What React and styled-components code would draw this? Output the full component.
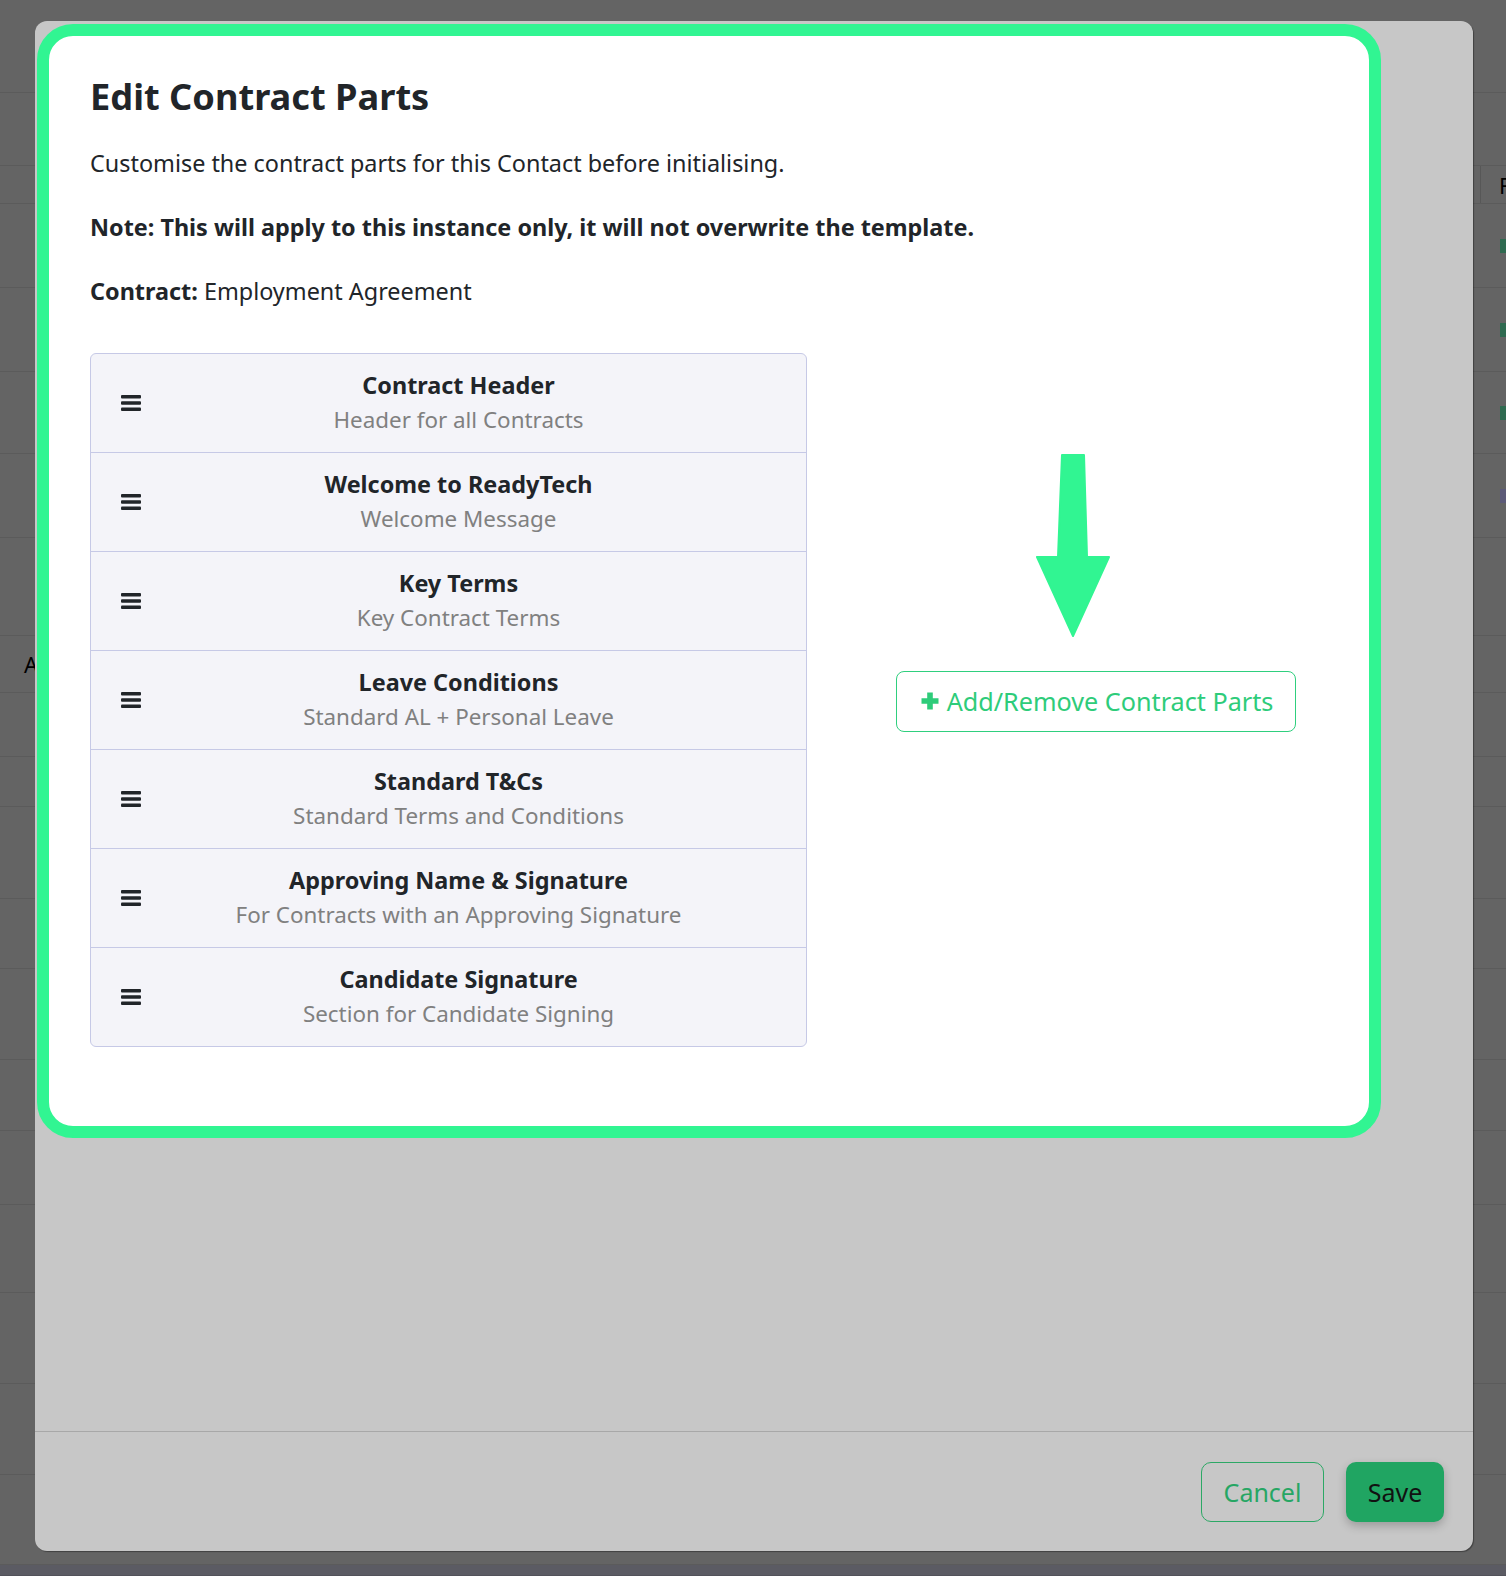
import React from 'react';
import styled, { createGlobalStyle } from 'styled-components';

const GlobalStyle = createGlobalStyle`
  html, body {
    margin: 0;
    padding: 0;
  }
  body {
    font-family: 'Noto Sans', 'Open Sans', sans-serif;
    color: #212529;
    background: #646464;
  }
  * {
    box-sizing: border-box;
  }
`;

const Screen = styled.div`
  position: relative;
  width: 1506px;
  height: 1576px;
  overflow: hidden;
  background: #646464;
`;

// page behind the backdrop (a dimmed table)
const BackPage = styled.div`
  display: flex;
  flex-direction: column;
`;

const BackRow = styled.div`
  height: ${(p) => p.$h}px;
  display: flex;
  align-items: center;
  justify-content: space-between;
  padding-left: 24px;
  border-bottom: 1px solid rgba(0, 0, 0, 0.09);
  background: ${(p) => p.$bg || 'transparent'};
`;

const BackLabel = styled.span`
  font-size: 22px;
  color: #000;
`;

const HeadCell = styled.span`
  align-self: stretch;
  display: flex;
  align-items: center;
  width: 26px;
  padding-left: 18px;
  border-left: 1px solid rgba(0, 0, 0, 0.12);
  font-size: 22px;
  color: #000;
`;

const Tag = styled.span`
  width: 14px;
  height: 14px;
  margin-right: -8px;
  background: ${(p) => p.$color};
`;

const Modal = styled.div`
  position: absolute;
  left: 35px;
  top: 21px;
  width: 1438px;
  height: 1530px;
  background: #c7c7c7;
  border-radius: 12px;
  box-shadow: 1px 1px 1px rgba(0, 0, 0, 0.35);
  display: flex;
  flex-direction: column;
`;

const ModalBody = styled.div`
  flex: 1;
  padding: 3px 0 0 2px;
`;

const Highlight = styled.section`
  width: 1344px;
  height: 1114px;
  border: 12px solid #31f592;
  border-radius: 36px;
  background: #fff;
  padding: 39px 41px 0;
`;

const Title = styled.h2`
  margin: 0 0 30px;
  font-size: 36.2px;
  line-height: 42px;
  font-weight: 700;
`;

const Text = styled.p`
  margin: 0 0 30.5px;
  font-size: 23.4px;
  line-height: 33.6px;
  font-weight: ${(p) => (p.$bold ? 700 : 400)};

  &:last-of-type {
    margin-bottom: 0;
  }
`;

const Content = styled.div`
  display: flex;
  margin-top: 44px;
`;

const PartList = styled.ul`
  list-style: none;
  margin: 0;
  padding: 0;
  width: 717px;
  border: 1px solid #c6c9e6;
  border-radius: 6px;
  background: #f4f4f9;
  overflow: hidden;
`;

const PartRow = styled.li`
  display: flex;
  align-items: center;
  padding: 15.4px 30px;
  border-bottom: 1px solid #c6c9e6;

  &:last-child {
    border-bottom: 0;
  }
`;

const PartText = styled.div`
  flex: 1;
  text-align: center;
  line-height: 33.6px;
`;

const PartName = styled.div`
  font-size: 23.4px;
  font-weight: 700;
  color: #212529;
`;

const PartDesc = styled.div`
  font-size: 22.4px;
  color: #808080;
`;

const SideColumn = styled.div`
  flex: 1;
  margin-left: 57px;
  padding-top: 101px;
  display: flex;
  flex-direction: column;
  align-items: center;
  gap: 34px;
`;

const ArrowMark = styled.svg`
  display: block;
  margin-right: 47px;
`;

const AddButton = styled.button`
  display: inline-flex;
  align-items: center;
  gap: 7px;
  height: 61px;
  padding: 0 22px 0 23px;
  border: 1px solid #2fcf7e;
  border-radius: 8px;
  background: #fff;
  color: #2ecc7a;
  font-family: inherit;
  font-size: 25.2px;
`;

const Footer = styled.div`
  height: 120px;
  border-top: 1px solid #a8a8a8;
  display: flex;
  align-items: center;
  justify-content: flex-end;
  gap: 22px;
  padding-right: 29px;
`;

const FooterButton = styled.button`
  height: 60px;
  width: ${(p) => p.$w}px;
  border-radius: 10px;
  font-family: inherit;
  font-size: 25px;
  border: ${(p) => (p.$primary ? 'none' : '1px solid #2ca865')};
  background: ${(p) => (p.$primary ? '#20a562' : 'transparent')};
  color: ${(p) => (p.$primary ? '#111' : '#26a664')};
  box-shadow: ${(p) => (p.$primary ? '0 4px 10px rgba(0, 0, 0, 0.22)' : 'none')};
`;

const backRows = [
  { h: 93 },
  { h: 73 },
  { h: 38, head: 'F' },
  { h: 84, tag: '#2f6a50' },
  { h: 84, tag: '#2f6a50' },
  { h: 82, tag: '#2f6a50' },
  { h: 84, tag: '#5c5a78' },
  { h: 98 },
  { h: 57, label: 'A' },
  { h: 64 },
  { h: 50 },
  { h: 92 },
  { h: 70 },
  { h: 91 },
  { h: 71 },
  { h: 74 },
  { h: 88 },
  { h: 91 },
  { h: 91 },
  { h: 90 },
  { h: 11, bg: '#5b5b63' },
];

const parts = [
  { name: 'Contract Header', desc: 'Header for all Contracts' },
  { name: 'Welcome to ReadyTech', desc: 'Welcome Message' },
  { name: 'Key Terms', desc: 'Key Contract Terms' },
  { name: 'Leave Conditions', desc: 'Standard AL + Personal Leave' },
  { name: 'Standard T&Cs', desc: 'Standard Terms and Conditions' },
  { name: 'Approving Name & Signature', desc: 'For Contracts with an Approving Signature' },
  { name: 'Candidate Signature', desc: 'Section for Candidate Signing' },
];

const DragHandle = () => (
  <svg width='20' height='16' viewBox='0 0 20 16'>
    <rect x='0' y='0' width='20' height='3.6' rx='1' fill='#212529' />
    <rect x='0' y='6.2' width='20' height='3.6' rx='1' fill='#212529' />
    <rect x='0' y='12.4' width='20' height='3.6' rx='1' fill='#212529' />
  </svg>
);

const PlusIcon = () => (
  <svg width='20' height='20' viewBox='0 0 20 20'>
    <path d='M7.2 1.5h5.6v5.7h5.7v5.6h-5.7v5.7H7.2v-5.7H1.5V7.2h5.7z' fill='#2ecc7a' />
  </svg>
);

const App = () => {
  return (
    <Screen>
      <GlobalStyle />
      <BackPage>
        {backRows.map((row, i) => (
          <BackRow key={i} $h={row.h} $bg={row.bg}>
            <BackLabel>{row.label || ''}</BackLabel>
            {row.head && <HeadCell>{row.head}</HeadCell>}
            {row.tag && <Tag $color={row.tag} />}
          </BackRow>
        ))}
      </BackPage>

      <Modal>
        <ModalBody>
          <Highlight>
            <Title>Edit Contract Parts</Title>
            <Text>Customise the contract parts for this Contact before initialising.</Text>
            <Text $bold>Note: This will apply to this instance only, it will not overwrite the template.</Text>
            <Text>
              <b>Contract:</b> Employment Agreement
            </Text>

            <Content>
              <PartList>
                {parts.map((part) => (
                  <PartRow key={part.name}>
                    <DragHandle />
                    <PartText>
                      <PartName>{part.name}</PartName>
                      <PartDesc>{part.desc}</PartDesc>
                    </PartText>
                  </PartRow>
                ))}
              </PartList>

              <SideColumn>
                <ArrowMark width='74' height='183' viewBox='-1 -1 74 183'>
                  <polygon
                    points='25,0 47,0 50,102 72,102 36,181 0,102 21,102'
                    fill='#31f592'
                    stroke='#31f592'
                    strokeWidth='2'
                    strokeLinejoin='round'
                  />
                </ArrowMark>
                <AddButton type='button'>
                  <PlusIcon />
                  Add/Remove Contract Parts
                </AddButton>
              </SideColumn>
            </Content>
          </Highlight>
        </ModalBody>

        <Footer>
          <FooterButton type='button' $w={123}>
            Cancel
          </FooterButton>
          <FooterButton type='button' $w={98} $primary>
            Save
          </FooterButton>
        </Footer>
      </Modal>
    </Screen>
  );
};

export default App;
